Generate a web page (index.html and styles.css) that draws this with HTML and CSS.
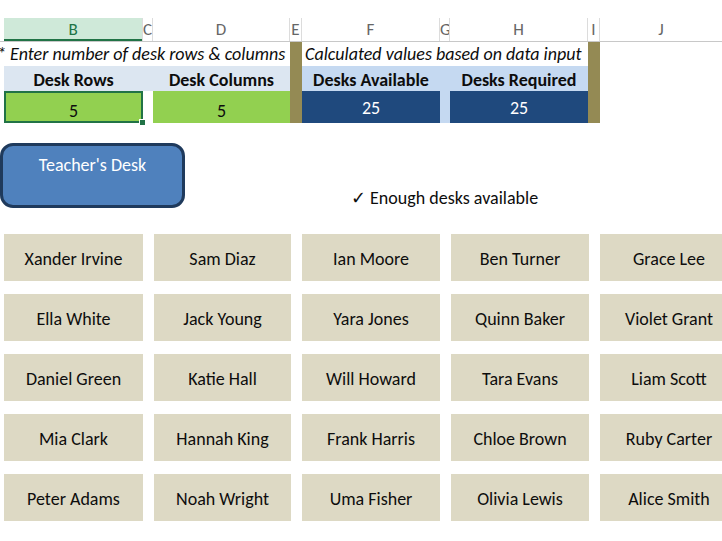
FILE: index.html
```html
<!DOCTYPE html>
<html>
<head>
<meta charset="utf-8">
<link rel="stylesheet" href="styles.css">
</head>
<body>
<div class="sheet">
  <div class="colheads">
    <div class="ch ch-a"></div>
    <div class="ch ch-sel">B</div>
    <div class="ch">C</div>
    <div class="ch">D</div>
    <div class="ch">E</div>
    <div class="ch">F</div>
    <div class="ch">G</div>
    <div class="ch">H</div>
    <div class="ch">I</div>
    <div class="ch ch-last">J</div>
  </div>
  <div class="top">
    <div class="note note-left">* Enter number of desk rows &amp; columns</div>
    <div class="olive olive-e"></div>
    <div class="note note-right">Calculated values based on data input</div>
    <div class="olive olive-i"></div>

    <div class="lbl-band lbl-left"></div>
    <div class="lbl lbl-b">Desk Rows</div>
    <div class="lbl lbl-d">Desk Columns</div>
    <div class="lbl-band lbl-right"></div>
    <div class="lbl lbl-f">Desks Available</div>
    <div class="lbl lbl-h">Desks Required</div>

    <div class="inp inp-b">5<span class="handle"></span></div>
    <div class="inp inp-d">5</div>
    <div class="calc calc-f">25</div>
    <div class="gap-g"></div>
    <div class="calc calc-h">25</div>
  </div>

  <div class="middle">
    <div class="teacher">Teacher's Desk</div>
    <div class="status">✓ Enough desks available</div>
  </div>

  <div class="desks">
    <div class="desk">Xander Irvine</div>
    <div class="desk">Sam Diaz</div>
    <div class="desk">Ian Moore</div>
    <div class="desk">Ben Turner</div>
    <div class="desk">Grace Lee</div>
    <div class="desk">Ella White</div>
    <div class="desk">Jack Young</div>
    <div class="desk">Yara Jones</div>
    <div class="desk">Quinn Baker</div>
    <div class="desk">Violet Grant</div>
    <div class="desk">Daniel Green</div>
    <div class="desk">Katie Hall</div>
    <div class="desk">Will Howard</div>
    <div class="desk">Tara Evans</div>
    <div class="desk">Liam Scott</div>
    <div class="desk">Mia Clark</div>
    <div class="desk">Hannah King</div>
    <div class="desk">Frank Harris</div>
    <div class="desk">Chloe Brown</div>
    <div class="desk">Ruby Carter</div>
    <div class="desk">Peter Adams</div>
    <div class="desk">Noah Wright</div>
    <div class="desk">Uma Fisher</div>
    <div class="desk">Olivia Lewis</div>
    <div class="desk">Alice Smith</div>
  </div>
</div>
</body>
</html>
```

FILE: styles.css
```css
html, body {
  margin: 0;
  padding: 0;
  background: #ffffff;
}

.sheet {
  width: 722px;
  height: 541px;
  overflow: hidden;
  font-family: Carlito, Lato, "Open Sans", sans-serif;
  color: #0d0d0d;
}

.colheads {
  margin-top: 18px;
  display: grid;
  grid-template-columns: 4px 139px 10px 137px 12px 138px 10px 138px 12px 1fr;
  height: 23px;
  border-bottom: 1px solid #c8c8c8;
  background: #ffffff;
}

.ch {
  font-size: 17px;
  line-height: 23px;
  color: #666666;
  text-align: center;
  border-right: 1px solid #dcdcdc;
  overflow: hidden;
}

.ch-a {
  border-right: none;
}

.ch-last {
  border-right: none;
}

.ch-sel {
  background: #cfe9d9;
  color: #217346;
  box-shadow: inset 0 -2px 0 #217346;
}

.top {
  display: grid;
  grid-template-columns: 4px 139px 10px 137px 12px 138px 10px 138px 12px 1fr;
  grid-template-rows: 24px 25px 32px;
}

.note {
  font-style: italic;
  font-size: 18px;
  line-height: 25px;
  white-space: nowrap;
  grid-row: 1;
}

.note-left {
  grid-column: 1 / 5;
  margin-left: -3px;
}

.note-right {
  grid-column: 6 / 9;
  padding-left: 3px;
}

.olive {
  background: #948a54;
  grid-row: 1 / 4;
}

.olive-e {
  grid-column: 5;
}

.olive-i {
  grid-column: 9;
}

.lbl-band {
  grid-row: 2;
}

.lbl-left {
  grid-column: 2 / 5;
  background: #dce6f1;
}

.lbl-right {
  grid-column: 6 / 9;
  background: #c5d9f1;
}

.lbl {
  grid-row: 2;
  font-weight: bold;
  font-size: 18px;
  line-height: 28px;
  text-align: center;
  white-space: nowrap;
  z-index: 1;
}

.lbl-b { grid-column: 2; }
.lbl-d { grid-column: 4; }
.lbl-f { grid-column: 6; }
.lbl-h { grid-column: 8; }

.inp {
  grid-row: 3;
  background: #92d050;
  font-size: 18px;
  text-align: center;
  line-height: 41px;
}

.inp-b {
  grid-column: 2;
  position: relative;
  box-shadow: inset 0 0 0 2px #217346;
}

.inp-d {
  grid-column: 4;
}

.handle {
  position: absolute;
  right: -3px;
  bottom: -3px;
  width: 5px;
  height: 5px;
  background: #217346;
  border: 1px solid #ffffff;
}

.calc {
  grid-row: 3;
  background: #1f497d;
  color: #ffffff;
  font-size: 18px;
  text-align: center;
  line-height: 35px;
}

.calc-f { grid-column: 6; }
.calc-h { grid-column: 8; }

.gap-g {
  grid-row: 3;
  grid-column: 7;
  background: #c5d9f1;
}

.middle {
  display: flex;
  align-items: flex-end;
  margin-top: 20px;
}

.teacher {
  width: 179px;
  margin-left: 0;
  background: #4f81bd;
  border: 3px solid #1f3a5c;
  border-radius: 13px;
  color: #ffffff;
  font-size: 18px;
  text-align: center;
  line-height: 22px;
  padding-top: 8px;
  box-sizing: content-box;
  height: 51px;
}

.status {
  margin-left: 166px;
  font-size: 18px;
  line-height: 22px;
  margin-bottom: -1px;
  white-space: nowrap;
}

.desks {
  margin-top: 26px;
  margin-left: 4px;
  display: grid;
  grid-template-columns: 139px 137px 138px 138px 138px;
  column-gap: 11px;
  row-gap: 13px;
  grid-auto-rows: 47px;
}

.desk {
  background: #ddd9c4;
  font-size: 18px;
  display: flex;
  align-items: center;
  justify-content: center;
  padding-top: 2px;
  white-space: nowrap;
}
```
